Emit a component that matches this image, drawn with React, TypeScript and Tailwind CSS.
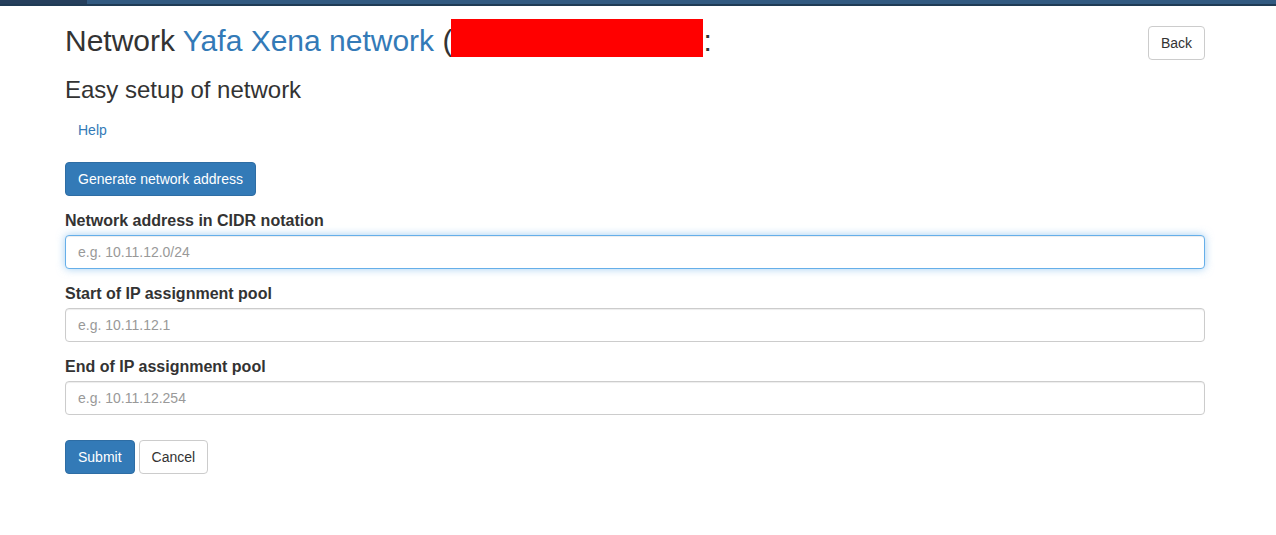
const fieldBase =
  'block w-full h-[34px] px-3 text-[14px] text-[#555] bg-white border rounded-[4px] outline-none placeholder:text-[#999]';

interface Field {
  label: string;
  placeholder: string;
  focused?: boolean;
}

const fields: Field[] = [
  { label: 'Network address in CIDR notation', placeholder: 'e.g. 10.11.12.0/24', focused: true },
  { label: 'Start of IP assignment pool', placeholder: 'e.g. 10.11.12.1' },
  { label: 'End of IP assignment pool', placeholder: 'e.g. 10.11.12.254' },
];

export default function App() {
  return (
    <div className="min-h-[535px] bg-white text-[#333] font-['Liberation_Sans',Arial,sans-serif] text-[14px] leading-5">
      {/* Top bar */}
      <div className="h-[6px] bg-[#325a81] border-b-2 border-[#1f3b55]">
        <div className="w-[87px] h-[4px] bg-[#253f5c]" />
      </div>

      <div className="ml-[65px] w-[1140px]">
        {/* Header */}
        <div className="flex justify-between items-start pt-[18px]">
          <h2 className="h-[33px] text-[30px] leading-[33px] font-normal whitespace-nowrap">
            Network <a className="text-[#337ab7]">Yafa Xena network</a> (
            <span className="inline-block align-[-6px] w-[252px] h-[38px] -mt-[5px] -ml-[1px] bg-[#ff0000]" />:
          </h2>
          <button className="mt-[2px] h-[34px] px-3 border border-[#ccc] rounded-[4px] bg-white text-[#333] text-[14px]">
            Back
          </button>
        </div>

        <h3 className="mt-[17px] text-[24px] leading-[26px] font-normal">Easy setup of network</h3>

        {/* Nav */}
        <div className="mt-[7px] flex">
          <a className="block py-[10px] px-[13px] text-[#337ab7]">Help</a>
        </div>

        <button className="mt-[12px] h-[34px] px-3 bg-[#337ab7] border border-[#2e6da4] rounded-[4px] text-white text-[14px]">
          Generate network address
        </button>

        <form className="mt-[15px]" onSubmit={(e) => e.preventDefault()}>
          {fields.map((f) => (
            <div key={f.label} className="mb-[15px]">
              <label className="block mb-[4px] text-[16px] leading-5 font-bold">{f.label}</label>
              <input
                className={
                  fieldBase +
                  (f.focused
                    ? ' border-[#66afe9] shadow-[inset_0_1px_1px_rgba(0,0,0,0.075),0_0_8px_rgba(102,175,233,0.6)]'
                    : ' border-[#ccc] shadow-[inset_0_1px_1px_rgba(0,0,0,0.075)]')
                }
                placeholder={f.placeholder}
              />
            </div>
          ))}

          <div className="mt-[25px] flex gap-[4px]">
            <button className="h-[34px] px-3 bg-[#337ab7] border border-[#2e6da4] rounded-[4px] text-white text-[14px]">
              Submit
            </button>
            <button className="h-[34px] px-3 bg-white border border-[#ccc] rounded-[4px] text-[#333] text-[14px]">
              Cancel
            </button>
          </div>
        </form>
      </div>
    </div>
  );
}
